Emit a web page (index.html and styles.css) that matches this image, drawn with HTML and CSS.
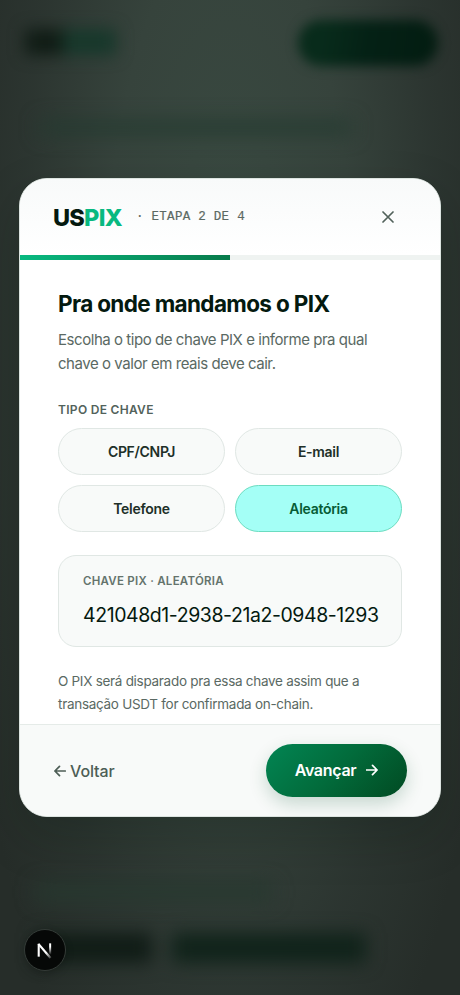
FILE: index.html
```html
<!DOCTYPE html>
<html lang="pt-BR">
<head>
<meta charset="utf-8">
<title>USPIX</title>
<link rel="stylesheet" href="styles.css">
</head>
<body>
<div class="page" aria-hidden="true">
  <div class="page-top"><div class="page-brand"><i></i><b></b></div><div class="page-cta"></div></div>
  <div class="page-line"></div>
  <div class="page-bottom">
    <div class="page-eyebrow"></div>
    <div class="page-heading"><i></i><b></b></div>
  </div>
</div>
<main class="dialog" role="dialog">
  <header class="head">
    <div class="logo">US<span>PIX</span></div>
    <div class="step">· ETAPA 2 DE 4</div>
    <svg class="close" viewBox="0 0 12 12"><path d="M1 1l10 10M11 1L1 11"/></svg>
  </header>
  <div class="progress"><div class="bar"></div></div>
  <section class="content">
    <h1>Pra onde mandamos o PIX</h1>
    <p class="lead">Escolha o tipo de chave PIX e informe pra qual<br>chave o valor em reais deve cair.</p>
    <div class="label">TIPO DE CHAVE</div>
    <div class="options">
      <button>CPF/CNPJ</button>
      <button>E-mail</button>
      <button>Telefone</button>
      <button class="active">Aleatória</button>
    </div>
    <div class="field">
      <div class="field-label">CHAVE PIX · ALEATÓRIA</div>
      <div class="value">421048d1-2938-21a2-0948-1293</div>
    </div>
    <p class="note">O PIX será disparado pra essa chave assim que a<br>transação USDT for confirmada on-chain.</p>
  </section>
  <footer class="foot">
    <div class="back"><svg class="arrow" viewBox="0 0 12 12"><path d="M11.3 6H1M5.5 1.3L.9 6l4.6 4.7"/></svg><span>Voltar</span></div>
    <button class="next"><span>Avançar</span><svg class="arrow" viewBox="0 0 12 12"><path d="M.5 6H11M6.5 1.3L11.1 6l-4.6 4.7"/></svg></button>
  </footer>
</main>
<div class="badge">
  <svg viewBox="0 0 42 42">
    <defs>
      <linearGradient id="stem" x1="0" y1="14" x2="0" y2="26" gradientUnits="userSpaceOnUse"><stop offset=".3" stop-color="#fff"/><stop offset="1" stop-color="#fff" stop-opacity="0"/></linearGradient>
      <linearGradient id="diag" x1="20" y1="21" x2="28" y2="30" gradientUnits="userSpaceOnUse"><stop offset=".3" stop-color="#fff"/><stop offset="1" stop-color="#fff" stop-opacity=".1"/></linearGradient>
    </defs>
    <path d="M14.4 28V14.5" stroke="#fff" stroke-width="2.2"/>
    <path d="M14.1 14.6L26.8 29.4" stroke="url(#diag)" stroke-width="2.3"/>
    <path d="M26.4 14V26" stroke="url(#stem)" stroke-width="2.1"/>
  </svg>
</div>
</body>
</html>
```
FILE: styles.css
```css
* { box-sizing: border-box; }
html, body { margin: 0; height: 995px; overflow: hidden; }
body {
  display: grid;
  place-items: start center;
  padding-top: 178px;
  font-family: Inter, "Liberation Sans", sans-serif;
  color: #04190f;
  background:
    radial-gradient(ellipse 280px 900px at 50% 33%, #3a4b42 0%, #36433c 45%, rgba(46,56,51,.75) 75%, rgba(38,46,42,0) 100%),
    #262d29;
}
button { font: inherit; padding: 0; }
h1, p { margin: 0; }
.page { position: absolute; inset: 0; overflow: hidden; }
.page-top { height: 86px; padding: 20px 22px 0 25px; display: flex; justify-content: space-between; }
.page-brand { display: flex; padding-top: 9px; filter: blur(8px); }
.page-brand i { width: 38px; height: 26px; background: #101c15; }
.page-brand b { width: 53px; height: 26px; background: #17382b; }
.page-cta { width: 140px; height: 46px; border-radius: 23px; background: linear-gradient(100deg, #082b1b 20%, #042115 50%, #031c11); filter: blur(6px); }
.page-line { width: 312px; height: 13px; margin: 35px 0 0 40px; background: #243a30; filter: blur(10px); }
.page-bottom { margin-top: 750px; padding-left: 36px; }
.page-eyebrow { width: 236px; height: 16px; background: #26382f; filter: blur(10px); }
.page-heading { margin-top: 33px; display: flex; gap: 20px; filter: blur(9px); }
.page-heading i { width: 116px; height: 30px; background: #101c16; }
.page-heading b { width: 194px; height: 30px; background: #10231a; }
.dialog {
  position: relative;
  width: 422px;
  height: 639px;
  border: 1px solid #dce4e0;
  border-radius: 28px;
  background: #fff;
  overflow: hidden;
  box-shadow: 0 20px 50px rgba(0,20,10,.2);
  display: flex;
  flex-direction: column;
}
.head {
  height: 77px;
  flex: none;
  display: flex;
  align-items: center;
  padding: 0 46px 0 33px;
  border-bottom: 1px solid #e7ecea;
  background: linear-gradient(#f8fafa, #fff);
}
.logo { width: 83px; font-size: 23.5px; font-weight: 800; letter-spacing: -.75px; white-space: nowrap; }
.logo span { color: #08b980; }
.step { font: 12.5px "Liberation Mono", monospace; letter-spacing: .28px; color: #5b6963; white-space: pre; -webkit-text-stroke: .2px #5b6963; }
.close { width: 12px; height: 12px; margin-left: auto; }
.close path, .arrow path { fill: none; stroke: currentColor; stroke-width: 1.7; stroke-linecap: round; stroke-linejoin: round; }
.close { color: #52625b; }
.progress { height: 5px; margin-top: -1px; flex: none; background: #eff3f1; }
.bar { width: 50%; height: 5px; background: linear-gradient(90deg, #08b980, #087b4b); }
.content { padding: 28px 38px 0; flex: 1; white-space: nowrap; }
h1 { font-size: 22.5px; font-weight: 650; letter-spacing: -.65px; line-height: 32px; }
.lead { margin-top: 8px; font-size: 15px; line-height: 24px; color: #5a6963; letter-spacing: -.45px; }
.label { margin-top: 25px; font-size: 12px; font-weight: 600; line-height: 17px; letter-spacing: .3px; color: #52625b; }
.options { margin-top: 10px; display: grid; grid-template-columns: 167px 167px; grid-auto-rows: 47px; gap: 10px; }
.options button { border: 1px solid #e0e7e4; border-radius: 24px; background: #f8faf9; color: #202f28; font-size: 14px; font-weight: 600; letter-spacing: -.3px; }
.options .active { background: #a4fff6; border-color: #6bdcc0; color: #075c35; }
.field { margin-top: 23px; height: 92px; padding: 17px 24px 0; border: 1px solid #e0e7e4; border-radius: 18px; background: #f8faf9; }
.field-label { font-size: 11.5px; font-weight: 600; line-height: 17px; letter-spacing: .26px; color: #64736c; }
.value { margin-top: 12px; font-size: 19.5px; line-height: 27px; letter-spacing: -.43px; }
.note { margin-top: 23px; font-size: 13.5px; line-height: 22.5px; letter-spacing: -.29px; color: #5a6963; }
.foot { height: 92px; flex: none; border-top: 1px solid #e5ebe8; padding: 0 33px 1px 34px; display: flex; align-items: center; justify-content: space-between; background: #f8faf9; }
.back { display: flex; align-items: center; gap: 4px; padding-top: 2px; font-size: 16px; font-weight: 550; letter-spacing: -.1px; color: #4d5e56; }
.arrow { width: 12px; height: 12px; }
.next { width: 141px; height: 53px; border: 0; border-radius: 27px; display: flex; align-items: center; justify-content: center; gap: 10px; color: #fff; font-size: 16px; font-weight: 600; letter-spacing: -.3px; background: linear-gradient(135deg, #028553 0%, #026b3b 50%, #014a22 100%); box-shadow: 0 7px 18px rgba(0,80,45,.2); }
.badge { position: absolute; left: 24px; top: 929px; width: 42px; height: 42px; border-radius: 50%; background: #060807; border: 1px solid #343b37; box-shadow: 0 3px 8px rgba(0,0,0,.2); }
.badge svg { display: block; width: 40px; height: 40px; }
```
